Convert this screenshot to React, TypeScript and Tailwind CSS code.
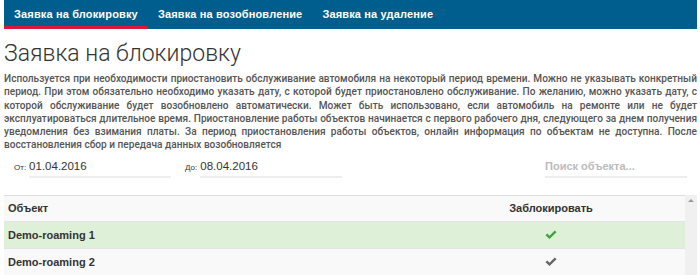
import React from 'react';

const tabs = ['Заявка на блокировку', 'Заявка на возобновление', 'Заявка на удаление'];

const rows = [
  { name: 'Demo-roaming 1', active: true },
  { name: 'Demo-roaming 2', active: false },
];

function Check({ color }: { color: string }) {
  return (
    <svg width="12" height="10" viewBox="0 0 12 10" fill={color}>
      <path d="M0.5 5.3 L2.3 3.6 L4.5 5.7 L9.8 0.5 L11.5 2.2 L4.5 9 Z" />
    </svg>
  );
}

export default function App() {
  return (
    <div className="w-[700px] h-[275px] overflow-hidden bg-white pl-1 pr-[3px]" style={{ fontFamily: '"Liberation Sans", Arial, sans-serif' }}>
      <nav className="flex h-[29px] bg-[#005e8e]">
        {tabs.map((t, i) => (
          <div
            key={t}
            className={`flex items-center px-[10px] text-[11px] tracking-[0.15px] font-bold text-white border-b-[3px] ${i === 0 ? 'border-[#d9183b]' : 'border-transparent'}`}
          >
            <span className="pt-[2px]">{t}</span>
          </div>
        ))}
      </nav>

      <h1 className="mt-[12px] text-[23px] leading-[26px] font-light text-[#333]" style={{ fontFamily: 'Roboto, "Liberation Sans", sans-serif' }}>
        Заявка на блокировку
      </h1>

      <p className="mt-[5px] text-[10.1px] leading-[13.3px] font-medium text-[#555] text-justify" style={{ fontFamily: 'Roboto, "Liberation Sans", sans-serif' }}>
        Используется при необходимости приостановить обслуживание автомобиля на некоторый период времени. Можно не указывать конкретный период. При этом обязательно необходимо указать дату, с которой будет приостановлено обслуживание. По желанию, можно указать дату, с которой обслуживание будет возобновлено автоматически. Может быть использовано, если автомобиль на ремонте или не будет эксплуатироваться длительное время. Приостановление работы объектов начинается с первого рабочего дня, следующего за днем получения уведомления без взимания платы. За период приостановления работы объектов, онлайн информация по объектам не доступна. После восстановления сбор и передача данных возобновляется
      </p>

      <div className="mt-[6px] flex items-end h-[20px]">
        <div className="flex items-end ml-[10px]">
          <span className="text-[8px] text-[#333] mr-[3px] mb-[4px]">От:</span>
          <div className="w-[142px] border-b-2 border-[#eeeeee] text-[11.5px] text-[#333] pb-[1px]">01.04.2016</div>
        </div>
        <div className="flex items-end ml-[14px]">
          <span className="text-[8px] text-[#333] mr-[3px] mb-[4px]">До:</span>
          <div className="w-[142px] border-b-2 border-[#eeeeee] text-[11.5px] text-[#333] pb-[1px]">08.04.2016</div>
        </div>
        <div className="ml-auto mr-[10px] w-[142px] border-b-2 border-[#eeeeee] text-[11px] font-bold text-[#bbbbbb] pb-[1px]">
          Поиск объекта...
        </div>
      </div>

      <div className="mt-[17px] flex">
        <div className="flex-1 border-t border-[#dddddd]">
          <div className="flex items-center h-[26px] bg-[#f9f9f9] border-b border-[#e4e4e4] text-[11px] font-bold text-[#333]">
            <div className="flex-1 pl-[4px]">Объект</div>
            <div className="w-[268px] text-center">Заблокировать</div>
          </div>
          {rows.map((r) => (
            <div
              key={r.name}
              className={`flex items-center h-[27px] border-b border-[#e4e4e4] text-[11px] font-bold text-[#333] ${r.active ? 'bg-[#dff0d8]' : 'bg-[#f9f9f9]'}`}
            >
              <div className="flex-1 pl-[4px]">{r.name}</div>
              <div className="w-[268px] flex justify-center">
                <Check color={r.active ? '#3fa33f' : '#666666'} />
              </div>
            </div>
          ))}
        </div>
        <div className="w-[12px] bg-[#f0f0f0] flex justify-center pt-[4px] h-[90px]">
          <span className="block w-0 h-0 border-l-[3px] border-r-[3px] border-b-[3px] border-l-transparent border-r-transparent border-b-[#999]" />
        </div>
      </div>
    </div>
  );
}
